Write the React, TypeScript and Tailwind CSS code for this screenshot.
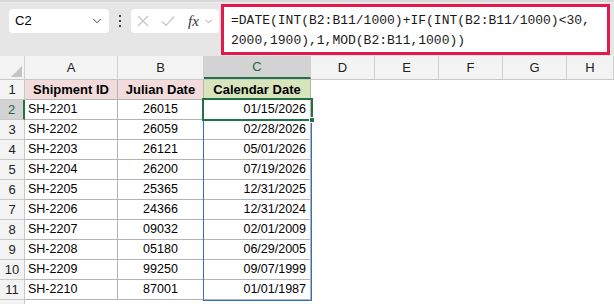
import { ChevronDown } from "lucide-react";

const data = [
  ["SH-2201", "26015", "01/15/2026"],
  ["SH-2202", "26059", "02/28/2026"],
  ["SH-2203", "26121", "05/01/2026"],
  ["SH-2204", "26200", "07/19/2026"],
  ["SH-2205", "25365", "12/31/2025"],
  ["SH-2206", "24366", "12/31/2024"],
  ["SH-2207", "09032", "02/01/2009"],
  ["SH-2208", "05180", "06/29/2005"],
  ["SH-2209", "99250", "09/07/1999"],
  ["SH-2210", "87001", "01/01/1987"],
];

const blankCols = ["w-[64px]", "w-[64px]", "w-[64px]", "w-[64px]", "flex-1"];

export default function App() {
  return (
    <div className="w-[614px] h-[304px] overflow-hidden bg-white font-['Liberation_Sans',sans-serif] text-black">
      {/* Formula bar */}
      <div className="h-[56px] bg-[#e6e6e6] flex flex-col">
        <div className="h-[3px] bg-[#d8d8d8] border-b border-[#ececec]" />
        <div className="flex items-start flex-1">
          <div className="ml-[9px] mt-[6px] w-[100px] h-[24px] bg-white rounded-[4px] flex items-center justify-between pl-[6px] pr-[5px] text-[13px]">
            <span>C2</span>
            <ChevronDown size={14} strokeWidth={1.6} className="text-[#333]" />
          </div>
          <div className="w-[22px] mt-[12px] flex flex-col items-center gap-[3px]">
            <span className="w-[2px] h-[2px] bg-[#444]" />
            <span className="w-[2px] h-[2px] bg-[#444]" />
            <span className="w-[2px] h-[2px] bg-[#444]" />
          </div>
          <div className="mt-[6px] w-[88px] h-[24px] bg-white rounded-[4px] flex items-center pl-[5px] gap-[4px]">
            <svg width="14" height="14" viewBox="0 0 14 14" className="text-[#c4c4c4]">
              <path d="M2 2 L12 12 M12 2 L2 12" stroke="currentColor" strokeWidth="1.2" fill="none" />
            </svg>
            <svg width="16" height="14" viewBox="0 0 16 14" className="text-[#c4c4c4] ml-[6px]">
              <path d="M2 7.5 L6 11.5 L14 2.5" stroke="currentColor" strokeWidth="1.2" fill="none" />
            </svg>
            <span className="ml-[8px] font-['Liberation_Serif',serif] italic text-[15px] text-[#333] leading-none">fx</span>
            <ChevronDown size={11} strokeWidth={1.5} className="text-[#777]" />
          </div>
          <div className="ml-[2px] mt-[1px] w-[389px] h-[51px] border-[3px] border-[#e3194c] bg-white pl-[7px] pt-[4px] font-['Liberation_Mono',monospace] text-[13px] leading-[20px] text-[#1a1a1a]">
            <div>=DATE(INT(B2:B11/1000)+IF(INT(B2:B11/1000)&lt;30,</div>
            <div>2000,1900),1,MOD(B2:B11,1000))</div>
          </div>
        </div>
      </div>

      {/* Grid */}
      <div className="relative text-[12.5px]">
        <div className="flex h-[24px] bg-[#f3f3f3] border-b border-[#c8c8c8] text-[13px] text-[#222]">
          <div className="w-[25px] border-r border-[#d0d0d0] relative">
            <div className="absolute right-[2px] bottom-[2px] w-0 h-0 border-l-[11px] border-l-transparent border-b-[11px] border-b-[#c4c4c4]" />
          </div>
          <div className="w-[93px] border-r border-[#d0d0d0] flex items-center justify-center">A</div>
          <div className="w-[86px] border-r border-[#d0d0d0] flex items-center justify-center">B</div>
          <div className="w-[107px] bg-[#d3d3d3] border-b-2 border-[#217346] border-r border-r-[#d0d0d0] flex items-center justify-center text-[#1d6a3c]">C</div>
          {["D", "E", "F", "G", "H"].map((l, i) => (
            <div key={l} className={`${blankCols[i]} border-r border-[#d0d0d0] flex items-center justify-center`}>
              {l}
            </div>
          ))}
        </div>

        <div className="flex h-[20px]">
          <div className="w-[25px] bg-[#f3f3f3] border-r border-b border-[#c8c8c8] flex items-center justify-center text-[13px] text-[#222]">1</div>
          <div className="w-[93px] bg-[#f2dcdb] border-r border-b border-[#b4b4b4] flex items-center justify-center font-bold text-[13px]">Shipment ID</div>
          <div className="w-[86px] bg-[#f2dcdb] border-r border-b border-[#b4b4b4] flex items-center justify-center font-bold text-[13px]">Julian Date</div>
          <div className="w-[107px] bg-[#d8e4bc] border-r border-b border-[#b4b4b4] flex items-center justify-center font-bold text-[13px]">Calendar Date</div>
          <div className="flex-1" />
        </div>

        {data.map((r, i) => (
          <div key={r[0]} className="flex h-[20px]">
            <div
              className={
                i === 0
                  ? "w-[25px] bg-[#d3d3d3] border-r-2 border-r-[#217346] border-b border-b-[#c8c8c8] flex items-center justify-center text-[13px] text-[#1d6a3c]"
                  : "w-[25px] bg-[#f3f3f3] border-r border-b border-[#c8c8c8] flex items-center justify-center text-[13px] text-[#222]"
              }
            >
              {i + 2}
            </div>
            <div className="w-[93px] border-r border-b border-[#b4b4b4] flex items-center pl-[3px]">{r[0]}</div>
            <div className="w-[86px] border-r border-b border-[#b4b4b4] flex items-center justify-center">{r[1]}</div>
            <div className="w-[107px] border-r border-b border-[#b4b4b4] flex items-center justify-end pr-[4px]">{r[2]}</div>
            <div className="flex-1" />
          </div>
        ))}

        <div className="flex h-[10px]">
          <div className="w-[25px] bg-[#f3f3f3] border-r border-[#c8c8c8]" />
        </div>

        {/* Spill range */}
        <div className="absolute left-[203px] top-[43px] w-[109px] h-[202px] border border-[#2e6fd2] pointer-events-none" />
        {/* Active cell */}
        <div className="absolute left-[202px] top-[42px] w-[111px] h-[23px] border-2 border-[#217346] pointer-events-none" />
        <div className="absolute left-[309px] top-[61px] w-[6px] h-[6px] bg-[#217346] border border-white" />
      </div>
    </div>
  );
}
